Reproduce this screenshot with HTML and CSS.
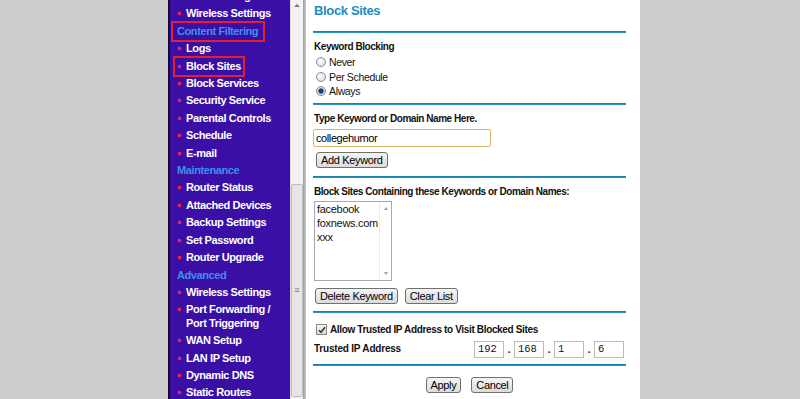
FILE: index.html
```html
<!DOCTYPE html>
<html lang="en">
<head>
  <meta charset="UTF-8" />
  <meta name="viewport" content="width=device-width, initial-scale=1.0"/>
  <title>Block Sites</title>
  <link rel="stylesheet" href="styles.css">
</head>
<body>

  <div class="page">

    <nav class="menu">
      <ul class="menu-list">
        <li class="item"><a>Basic Settings</a></li>
        <li class="item"><a>Wireless Settings</a></li>
        <li class="heading"><span class="boxed">Content Filtering</span></li>
        <li class="item"><a>Logs</a></li>
        <li class="item"><a class="boxed">Block Sites</a></li>
        <li class="item"><a>Block Services</a></li>
        <li class="item"><a>Security Service</a></li>
        <li class="item"><a>Parental Controls</a></li>
        <li class="item"><a>Schedule</a></li>
        <li class="item"><a>E-mail</a></li>
        <li class="heading"><span>Maintenance</span></li>
        <li class="item"><a>Router Status</a></li>
        <li class="item"><a>Attached Devices</a></li>
        <li class="item"><a>Backup Settings</a></li>
        <li class="item"><a>Set Password</a></li>
        <li class="item"><a>Router Upgrade</a></li>
        <li class="heading"><span>Advanced</span></li>
        <li class="item"><a>Wireless Settings</a></li>
        <li class="item"><a>Port Forwarding /<br>Port Triggering</a></li>
        <li class="item"><a>WAN Setup</a></li>
        <li class="item"><a>LAN IP Setup</a></li>
        <li class="item"><a>Dynamic DNS</a></li>
        <li class="item"><a>Static Routes</a></li>
      </ul>
    </nav>

    <div class="frame-scroll">
      <div class="arrow-up"></div>
      <div class="thumb"><span class="grip">&#8801;</span></div>
    </div>
    <div class="frame-edge"></div>

    <main class="content">
      <h1 class="title">Block Sites</h1>
      <div class="rule"></div>

      <section class="block first">
        <div class="label">Keyword Blocking</div>
        <div class="radio-row"><span class="radio"></span>Never</div>
        <div class="radio-row"><span class="radio"></span>Per Schedule</div>
        <div class="radio-row"><span class="radio checked"></span>Always</div>
      </section>
      <div class="rule"></div>

      <section class="block second">
        <div class="label">Type Keyword or Domain Name Here.</div>
        <input class="keyword" type="text" value="collegehumor">
        <div class="buttons indent"><button class="btn">Add Keyword</button></div>
      </section>
      <div class="rule"></div>

      <section class="block third">
        <div class="label">Block Sites Containing these Keywords or Domain Names:</div>
        <div class="listbox">
          <ul class="list-items">
            <li>facebook</li>
            <li>foxnews.com</li>
            <li>xxx</li>
          </ul>
          <div class="list-scroll">
            <span class="tri up"></span>
            <span class="tri down"></span>
          </div>
        </div>
        <div class="buttons">
          <button class="btn">Delete Keyword</button>
          <button class="btn">Clear List</button>
        </div>
      </section>
      <div class="rule"></div>

      <section class="block fourth">
        <div class="check-row">
          <span class="checkbox">
            <svg width="8" height="8" viewBox="0 0 8 8"><path d="M1 4.2 L3 6.3 L7 1.2" fill="none" stroke="#2b2b2b" stroke-width="1.4"/></svg>
          </span>
          Allow Trusted IP Address to Visit Blocked Sites
        </div>
        <div class="ip-row">
          <span class="label">Trusted IP Address</span>
          <div class="ip">
            <span class="ip-box">192</span><span class="dot">.</span>
            <span class="ip-box">168</span><span class="dot">.</span>
            <span class="ip-box">1</span><span class="dot">.</span>
            <span class="ip-box">6</span>
          </div>
        </div>
      </section>
      <div class="rule"></div>

      <div class="actions">
        <button class="btn">Apply</button>
        <button class="btn">Cancel</button>
      </div>
    </main>

  </div>

</body>
</html>
```

FILE: styles.css
```css
    body {
      margin: 0;
      background-color: #cccccc;
      font-family: "Liberation Sans", Arial, sans-serif;
      color: #111;
    }

    .page {
      display: flex;
      height: 399px;
      margin-left: 168px;
      overflow: hidden;
    }

    /* left menu frame */
    .menu {
      width: 120px;
      flex: none;
      border-left: 2px solid #130b36;
      background-color: #3a0fa6;
      overflow: hidden;
    }

    .menu-list {
      list-style: none;
      margin: -12px 0 0;
      padding: 0;
    }

    .menu-list li {
      padding: 2px 0 2px 7px;
      line-height: 13.4px;
      font-size: 11px;
      font-weight: bold;
      letter-spacing: -0.4px;
    }

    .item a {
      display: inline-block;
      padding-left: 9px;
      color: #ffffff;
      background: radial-gradient(circle, #e5245c 1.6px, transparent 2.2px) 0 4px / 5px 5px no-repeat;
    }

    .heading span {
      display: inline-block;
      color: #3f8fea;
    }

    .boxed {
      outline: 2px solid #e3202b;
      outline-offset: 2px;
    }

    .heading .boxed {
      padding: 0 3px 0 2px;
      margin-left: -2px;
    }

    /* frame scrollbar */
    .frame-scroll {
      width: 12px;
      flex: none;
      background-color: #f3f3f3;
      border-left: 1px solid #dcdcdc;
      display: flex;
      flex-direction: column;
      align-items: center;
    }

    .arrow-up {
      width: 0;
      height: 0;
      margin-top: 4px;
      border-left: 3px solid transparent;
      border-right: 3px solid transparent;
      border-bottom: 3px solid #7a7a7a;
    }

    .thumb {
      width: 10px;
      height: 211px;
      margin-top: 177px;
      border: 1px solid #bdbdbd;
      border-radius: 2px;
      background-color: #e6e6e6;
      display: flex;
      align-items: center;
      justify-content: center;
    }

    .grip {
      font-size: 9px;
      color: #777;
      line-height: 1;
    }

    .frame-edge {
      width: 3px;
      flex: none;
      background: linear-gradient(to right, #9c9c9c, #c8c8c8);
    }

    /* main frame */
    .content {
      width: 313px;
      flex: none;
      padding: 0 14px 0 7px;
      background-color: #ffffff;
      font-size: 10px;
      letter-spacing: -0.4px;
    }

    .title {
      margin: 0;
      height: 28px;
      padding-top: 3px;
      line-height: 15px;
      font-size: 13px;
      letter-spacing: -0.35px;
      color: #1d8cc4;
      padding-left: 1px;
    }

    .rule {
      height: 2px;
      background: linear-gradient(#0c7aa6, #2a9dcc);
    }

    .label {
      font-weight: bold;
      line-height: 14px;
      padding-left: 1px;
      letter-spacing: -0.45px;
    }

    .block.first { padding: 7px 0 4px; }
    .block.first .label { margin-bottom: 1px; }
    .block.second { padding: 7px 0 8px; }
    .block.third { padding: 7px 0 7px; }
    .block.fourth { padding: 10px 0 6px; }

    .radio-row {
      display: flex;
      align-items: center;
      height: 14.5px;
      padding-left: 3px;
      font-size: 10.5px;
      letter-spacing: -0.35px;
    }

    .radio {
      width: 8px;
      height: 8px;
      margin-right: 3px;
      border: 1px solid #8d8d8d;
      border-radius: 50%;
      background: radial-gradient(circle at 40% 35%, #ffffff, #d4d4d4);
    }

    .radio.checked {
      background: radial-gradient(circle, #1b3f7a 2.2px, #c9d6e6 3px, #e8e8e8);
    }

    .keyword {
      display: block;
      box-sizing: border-box;
      width: 178px;
      height: 18px;
      margin-top: 3px;
      padding: 0 2px;
      border: 1px solid #dcb46a;
      border-radius: 2px;
      font-family: "Liberation Sans", Arial, sans-serif;
      font-size: 11px;
      letter-spacing: -0.4px;
      color: #000;
      outline: none;
    }

    .buttons {
      display: flex;
      gap: 7px;
      margin-top: 5px;
      padding-left: 2px;
    }

    .buttons.indent {
      padding-left: 3px;
    }

    .third .buttons {
      margin-top: 7px;
    }

    .btn {
      height: 16px;
      padding: 0 4px;
      border: 1px solid #707070;
      border-radius: 3px;
      background: linear-gradient(#f4f4f4, #dcdcdc);
      font-family: "Liberation Sans", Arial, sans-serif;
      font-size: 11px;
      letter-spacing: -0.35px;
      line-height: 14px;
      color: #000;
    }

    .listbox {
      display: flex;
      box-sizing: border-box;
      width: 78px;
      height: 80px;
      margin: 2px 0 0 1px;
      border: 1px solid #a9a9a9;
    }

    .list-items {
      flex: 1;
      list-style: none;
      margin: 0;
      padding: 0 0 0 2px;
      font-size: 11px;
      letter-spacing: -0.3px;
      line-height: 14px;
    }

    .list-scroll {
      width: 11px;
      border-left: 1px solid #ececec;
      display: flex;
      flex-direction: column;
      justify-content: space-between;
      align-items: center;
      padding: 5px 0;
    }

    .tri {
      width: 0;
      height: 0;
      border-left: 2.5px solid transparent;
      border-right: 2.5px solid transparent;
    }

    .tri.up { border-bottom: 3px solid #a0a0a0; }
    .tri.down { border-top: 3px solid #a0a0a0; }

    .check-row {
      display: flex;
      align-items: center;
      height: 14px;
      padding-left: 3px;
      font-weight: bold;
      letter-spacing: -0.35px;
    }

    .checkbox {
      width: 9px;
      height: 9px;
      margin-right: 3px;
      border: 1px solid #8a8a8a;
      background: linear-gradient(#f6f6f6, #d6d6d6);
      display: flex;
      align-items: center;
      justify-content: center;
    }

    .ip-row {
      display: flex;
      justify-content: space-between;
      align-items: center;
      height: 17px;
      margin-top: 4px;
      padding-right: 2px;
    }

    .ip-row .label {
      letter-spacing: -0.2px;
    }

    .ip {
      display: flex;
      align-items: center;
    }

    .ip-box {
      box-sizing: border-box;
      width: 30px;
      height: 17px;
      padding-left: 3px;
      border: 1px solid #bdbdbd;
      font-family: "Liberation Mono", "Courier New", monospace;
      font-size: 10.5px;
      letter-spacing: 0;
      line-height: 15px;
    }

    .dot {
      width: 10px;
      text-align: center;
      font-weight: bold;
    }

    .actions {
      display: flex;
      justify-content: center;
      gap: 10px;
      margin-top: 11px;
    }
```
